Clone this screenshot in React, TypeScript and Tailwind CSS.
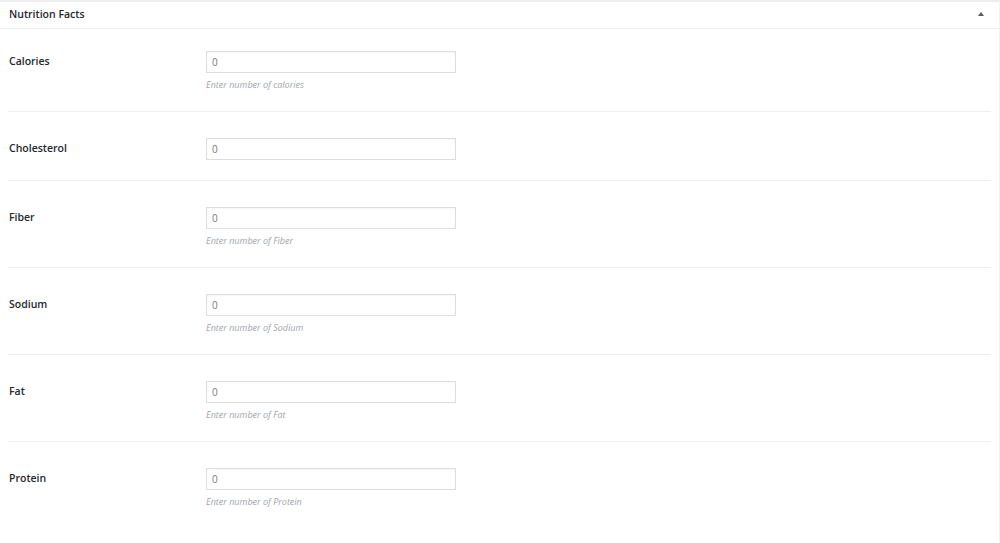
import { useState } from "react";

type Field = { key: string; label: string; hint?: string };

const fields: Field[] = [
  { key: "calories", label: "Calories", hint: "Enter number of calories" },
  { key: "cholesterol", label: "Cholesterol" },
  { key: "fiber", label: "Fiber", hint: "Enter number of Fiber" },
  { key: "sodium", label: "Sodium", hint: "Enter number of Sodium" },
  { key: "fat", label: "Fat", hint: "Enter number of Fat" },
  { key: "protein", label: "Protein", hint: "Enter number of Protein" },
];

export default function App() {
  const [values, setValues] = useState<Record<string, string>>(
    Object.fromEntries(fields.map((f) => [f.key, "0"]))
  );

  return (
    <div
      className="min-h-[543px] w-full bg-white"
      style={{ fontFamily: '"Open Sans", "Noto Sans", sans-serif' }}
    >
      <div className="min-h-[543px] border-t-2 border-r border-t-[#eeeeee] border-r-[#f3f3f3] bg-white">
        <div className="flex h-[27px] items-center justify-between border-b border-[#eeeeee] px-[9px]">
          <h3 className="text-[10.5px] font-semibold text-[#23282d]">Nutrition Facts</h3>
          <span className="mr-[6px] mb-[2px] h-0 w-0 border-x-[3px] border-b-[4px] border-x-transparent border-b-[#555d66]" />
        </div>

        <div className="px-2">
          {fields.map((f, i) => (
            <div
              key={f.key}
              className={`flex ${i === 0 ? "pt-[22px]" : "pt-[26px]"} ${f.hint ? "pb-[19px]" : "pb-[20px]"} ${
                i < fields.length - 1 ? "border-b border-[#eeeeee]" : ""
              }`}
            >
              <label
                htmlFor={f.key}
                className="w-[198px] shrink-0 pl-px pt-[2px] text-[10.5px] leading-[16px] font-semibold text-[#23282d]"
              >
                {f.label}
              </label>
              <div>
                <input
                  id={f.key}
                  type="text"
                  value={values[f.key]}
                  onChange={(e) => setValues((prev) => ({ ...prev, [f.key]: e.target.value }))}
                  className="block h-[22px] w-[250px] border border-[#dddddd] px-[5px] text-[10px] text-[#777777] shadow-[inset_0_1px_2px_rgba(0,0,0,0.04)] outline-none"
                />
                {f.hint ? (
                  <p className="mt-[5px] text-[9px] leading-[14px] italic text-[#a0a5aa]">{f.hint}</p>
                ) : null}
              </div>
            </div>
          ))}
        </div>
      </div>
    </div>
  );
}
